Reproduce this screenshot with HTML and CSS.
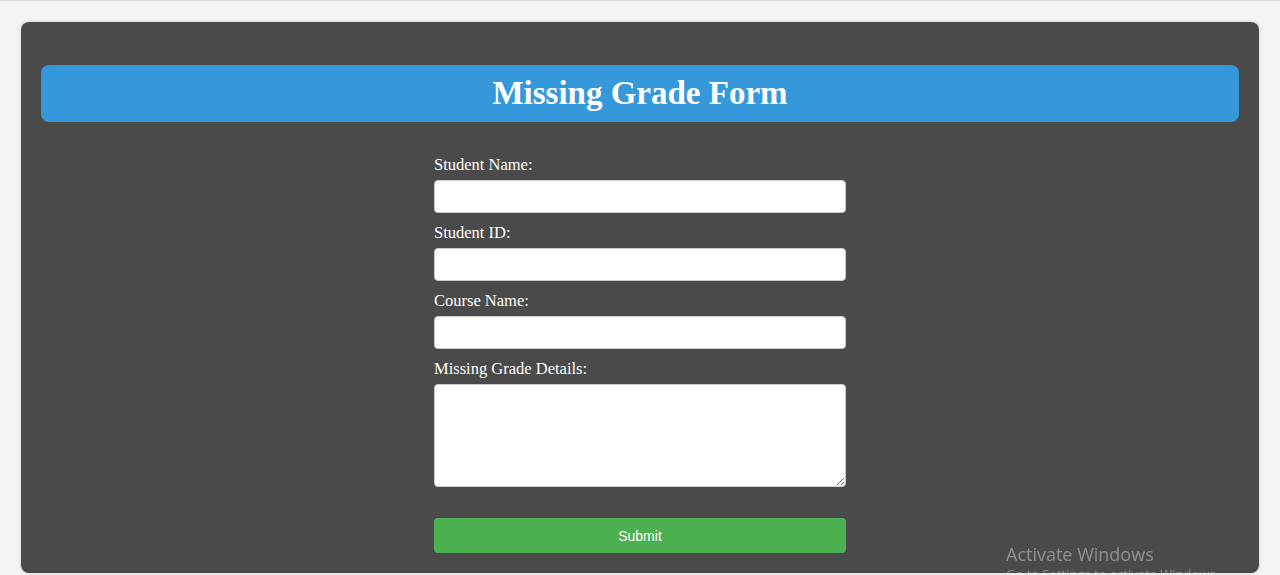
FILE: index.html
```html
<!DOCTYPE html>
<html lang="en">
<head>
<meta charset="utf-8">
<title>Missing Grade Form</title>
<link rel="stylesheet" href="styles.css">
</head>
<body>
<div class="container">
  <h1 class="title">Missing Grade Form</h1>
  <form class="form">
    <label class="label" for="name">Student Name:</label>
    <input class="field" id="name" type="text">
    <label class="label" for="sid">Student ID:</label>
    <input class="field" id="sid" type="text">
    <label class="label" for="course">Course Name:</label>
    <input class="field" id="course" type="text">
    <label class="label" for="details">Missing Grade Details:</label>
    <textarea class="field area" id="details"></textarea>
    <button class="submit" type="button">Submit</button>
  </form>
</div>
<div class="watermark">
  <div class="wm-title">Activate Windows</div>
  <div class="wm-sub">Go to Settings to activate Windows.</div>
</div>
</body>
</html>
```

FILE: styles.css
```css
html, body {
  margin: 0;
  padding: 0;
  height: 100%;
  overflow: hidden;
}
body {
  background: #f4f4f4;
  border-top: 1px solid #dcdcdc;
  box-sizing: border-box;
  padding: 21px 21px 0 21px;
  font-family: "Liberation Serif", "Times New Roman", serif;
}
.container {
  background: #4a4a4a;
  border-radius: 8px;
  box-shadow: 0 0 4px rgba(0, 0, 0, 0.15);
  padding: 43px 20px 20px 20px;
}
.title {
  margin: 0;
  background: #3498db;
  color: #ffffff;
  border-radius: 8px;
  text-align: center;
  font-size: 33px;
  font-weight: bold;
  line-height: 37px;
  padding: 10px 0;
}
.form {
  width: 412px;
  margin: 32px auto 0 auto;
  display: flex;
  flex-direction: column;
}
.label {
  color: #ffffff;
  font-size: 16.5px;
  line-height: 18px;
  padding-top: 2px;
  margin-bottom: 6px;
}
.field {
  box-sizing: border-box;
  width: 100%;
  height: 33px;
  border: 1px solid #cccccc;
  border-radius: 4px;
  background: #ffffff;
  margin: 0 0 9px 0;
  padding: 6px;
  font-family: "Liberation Sans", Arial, sans-serif;
  font-size: 14px;
}
.area {
  height: 103px;
  margin-bottom: 31px;
  resize: vertical;
}
.submit {
  height: 35px;
  border: none;
  border-radius: 4px;
  background: #4caf50;
  color: #ffffff;
  font-family: "Liberation Sans", Arial, sans-serif;
  font-size: 14px;
  cursor: pointer;
}
.watermark {
  position: fixed;
  left: 1006px;
  top: 543px;
  font-family: "Open Sans", "Noto Sans", sans-serif;
  color: rgba(255, 255, 255, 0.38);
  pointer-events: none;
}
.wm-title {
  font-size: 18px;
  line-height: 22px;
}
.wm-sub {
  font-size: 13px;
  line-height: 18px;
}
```
